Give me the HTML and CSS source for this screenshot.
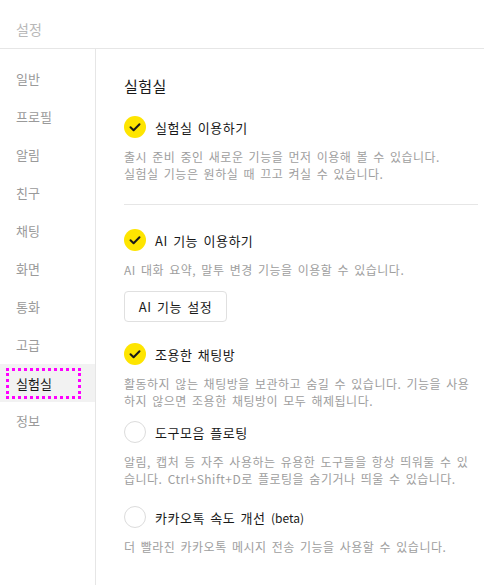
FILE: index.html
```html
<!DOCTYPE html>
<html>

<head>
    <link rel="stylesheet" href="styles.css">
</head>

<body>

    <div class="header">설정</div>

    <div class="main">
        <ul class="sidebar">
            <li>일반</li>
            <li>프로필</li>
            <li>알림</li>
            <li>친구</li>
            <li>채팅</li>
            <li>화면</li>
            <li>통화</li>
            <li>고급</li>
            <li class="active"><span class="focus">실험실</span></li>
            <li>정보</li>
        </ul>

        <div class="content">
            <h2>실험실</h2>

            <div class="option">
                <span class="check on">
                    <svg width="22" height="22" viewBox="0 0 22 22"><path d="M6.5 11.2 L9.6 14.2 L15.5 8.2" fill="none" stroke="#191919" stroke-width="2" stroke-linecap="round" stroke-linejoin="round"/></svg>
                </span>
                <span class="label">실험실 이용하기</span>
            </div>
            <p class="desc">출시 준비 중인 새로운 기능을 먼저 이용해 볼 수 있습니다.<br>실험실 기능은 원하실 때 끄고 켜실 수 있습니다.</p>

            <hr class="divider">

            <div class="option">
                <span class="check on">
                    <svg width="22" height="22" viewBox="0 0 22 22"><path d="M6.5 11.2 L9.6 14.2 L15.5 8.2" fill="none" stroke="#191919" stroke-width="2" stroke-linecap="round" stroke-linejoin="round"/></svg>
                </span>
                <span class="label">AI 기능 이용하기</span>
            </div>
            <p class="desc">AI 대화 요약, 말투 변경 기능을 이용할 수 있습니다.</p>
            <button class="btn">AI 기능 설정</button>

            <div class="option after-btn">
                <span class="check on">
                    <svg width="22" height="22" viewBox="0 0 22 22"><path d="M6.5 11.2 L9.6 14.2 L15.5 8.2" fill="none" stroke="#191919" stroke-width="2" stroke-linecap="round" stroke-linejoin="round"/></svg>
                </span>
                <span class="label">조용한 채팅방</span>
            </div>
            <p class="desc">활동하지 않는 채팅방을 보관하고 숨길 수 있습니다. 기능을 사용하지 않으면 조용한 채팅방이 모두 해제됩니다.</p>

            <div class="option">
                <span class="check"></span>
                <span class="label">도구모음 플로팅</span>
            </div>
            <p class="desc">알림, 캡처 등 자주 사용하는 유용한 도구들을 항상 띄워둘 수 있습니다. Ctrl+Shift+D로 플로팅을 숨기거나 띄울 수 있습니다.</p>

            <div class="option last">
                <span class="check"></span>
                <span class="label">카카오톡 속도 개선 <small>(beta)</small></span>
            </div>
            <p class="desc">더 빨라진 카카오톡 메시지 전송 기능을 사용할 수 있습니다.</p>
        </div>
    </div>

</body>

</html>
```

FILE: styles.css
```css
body {
    margin: 0;
    font-family: "Noto Sans CJK KR", "Liberation Sans", sans-serif;
    background-color: #fff;
    color: #191919;
    height: 585px;
    overflow: hidden;
}

.header {
    height: 49px;
    box-sizing: border-box;
    padding: 18px 0 0 16px;
    font-size: 14px;
    line-height: 22px;
    color: #b8b8b8;
    border-bottom: 1px solid #e6e6e6;
}

.main {
    display: flex;
    height: 536px;
}

.sidebar {
    list-style: none;
    margin: 0;
    padding: 11px 0 0 0;
    width: 95px;
    flex-shrink: 0;
    border-right: 1px solid #e6e6e6;
}

.sidebar li {
    height: 38px;
    line-height: 38px;
    padding-left: 16px;
    font-size: 13px;
    color: #9a9a9a;
}

.sidebar li.active {
    background-color: #f2f2f2;
    color: #191919;
    padding-left: 6px;
    display: flex;
    align-items: center;
}

.focus {
    display: block;
    width: 75px;
    height: 31px;
    box-sizing: border-box;
    border: 3px dotted #ff00ff;
    padding-left: 7px;
    line-height: 25px;
}

.content {
    flex: 1;
    padding: 26px 6px 0 28px;
    letter-spacing: 0.5px;
    word-spacing: 2px;
}

h2 {
    margin: 0;
    font-size: 15px;
    font-weight: normal;
    line-height: 22px;
}

.option {
    display: flex;
    align-items: center;
    height: 22px;
    margin-top: 19px;
}

.option.after-btn {
    margin-top: 21px;
}

.desc + .option {
    margin-top: 12px;
}

.desc + .option.last {
    margin-top: 19px;
}

.check {
    width: 22px;
    height: 22px;
    border-radius: 50%;
    box-sizing: border-box;
    border: 1px solid #dcdcdc;
    margin-right: 9px;
    flex-shrink: 0;
}

.check.on {
    background-color: #fee500;
    border: none;
}

.check svg {
    display: block;
}

.label {
    font-size: 13px;
}

.label small {
    font-size: 12px;
    letter-spacing: 0;
}

.desc {
    margin: 10px 0 0 0;
    font-size: 12px;
    line-height: 17px;
    color: #9e9e9e;
}

.divider {
    border: none;
    border-top: 1px solid #e6e6e6;
    margin: 22px 0 24px 0;
}

.divider + .option {
    margin-top: 0;
}

.btn {
    display: block;
    margin-top: 13px;
    width: 103px;
    height: 31px;
    background-color: #fff;
    border: 1px solid #e0e0e0;
    border-radius: 4px;
    font-family: inherit;
    font-size: 13px;
    letter-spacing: 0.5px;
    word-spacing: 2px;
    color: #191919;
    padding: 0;
}
```
